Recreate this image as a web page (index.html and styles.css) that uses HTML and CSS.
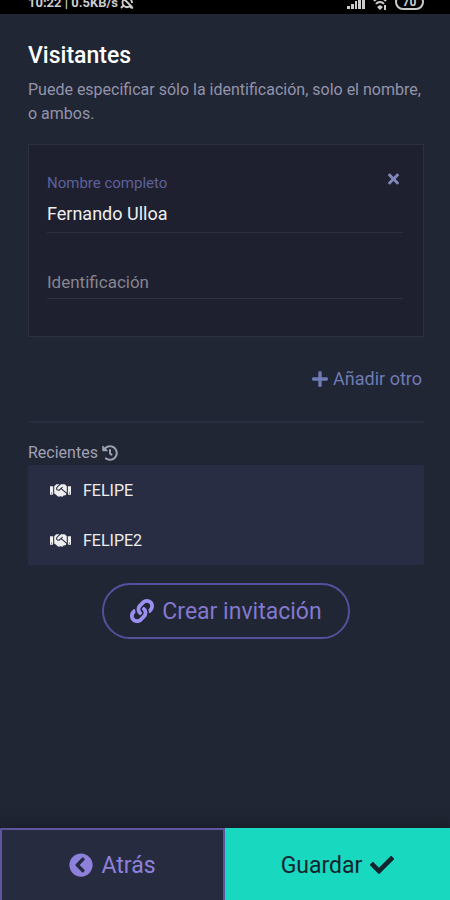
FILE: index.html
```html
<!DOCTYPE html>
<html lang="es">
<head>
    <meta charset="UTF-8">
    <meta name="viewport" content="width=device-width, initial-scale=1.0">
    <title>Visitantes</title>
    <link rel="stylesheet" href="styles.css">
</head>
<body>

    <!-- icons used more than once -->
    <svg class="sprite" aria-hidden="true">
        <symbol id="handshake" viewBox="0 0 640 512">
            <path d="M434.7 64h-85.9c-8 0-15.7 3-21.6 8.4l-98.3 90c-.1.1-.2.3-.3.4-16.6 15.6-16.3 40.5-2.1 56 12.7 13.9 39.4 17.6 56.1 2.7.1-.1.3-.1.4-.2l79.9-73.2c6.5-5.9 16.7-5.5 22.6 1 6 6.5 5.5 16.6-1 22.6l-26.1 23.9L504 313.8c2.9 2.4 5.5 5 7.9 7.7V128l-54.6-54.6c-5.9-6-14.1-9.4-22.6-9.4zM544 128.2v223.9c0 17.7 14.3 32 32 32h64V128.2h-96zm48 223.9c-8.8 0-16-7.2-16-16s7.2-16 16-16 16 7.2 16 16-7.2 16-16 16zM0 384h64c17.7 0 32-14.3 32-32V128.2H0V384zm48-63.9c8.8 0 16 7.2 16 16s-7.2 16-16 16-16-7.2-16-16c0-8.9 7.2-16 16-16zm435.9 18.6L334.6 217.5l-30 27.5c-29.7 27.1-75.2 24.5-101.7-4.4-26.9-29.4-24.8-74.9 4.4-101.7L289.1 64h-83.8c-8.5 0-16.6 3.4-22.6 9.4L128 128v223.9h18.3l90.5 81.9c27.4 22.3 67.7 18.1 90-9.3l.2-.2 17.9 15.5c15.9 13 39.4 10.5 52.3-5.4l31.4-38.6 5.4 4.4c13.7 11.1 33.9 9.1 45-4.7l9.5-11.7c11.2-13.8 9.1-33.9-4.6-45.1z"/>
        </symbol>
    </svg>

    <header class="status-bar">
        <div class="status-left">
            <span>10:22 | 0.5KB/s</span>
            <svg class="status-icon" viewBox="0 0 14 14">
                <path d="M2 1l10 10M4 3a5 5 0 0 0 0 7a5 5 0 0 0 6 0M7 2a5 5 0 0 1 5 5M3 10l-2 2M10 11l3 1" fill="none" stroke="currentColor" stroke-width="2"/>
            </svg>
        </div>
        <div class="status-right">
            <svg class="status-signal" viewBox="0 0 18 14">
                <path d="M0 10h3v3H0zM4 8h3v5H4zM8 5h2v8H8zM11 3h3v10h-3zM15 0h3v13h-3z" fill="currentColor"/>
            </svg>
            <svg class="status-icon" viewBox="0 0 14 14">
                <path d="M1 5a8 8 0 0 1 12 0M3 8a5 5 0 0 1 8 0" fill="none" stroke="currentColor" stroke-width="2"/>
                <path d="M7 9l3 2-3 3-3-3zM11 9h2v5h-2z" fill="currentColor"/>
            </svg>
            <span class="battery">70</span>
        </div>
    </header>

    <main class="content">
        <h1>Visitantes</h1>
        <p class="intro">Puede especificar sólo la identificación, solo el nombre, o ambos.</p>

        <form class="visitor-card" id="visitor-form">
            <button class="remove" type="button" aria-label="Quitar">
                <svg viewBox="0 0 352 512"><path d="M242.72 256l100.07-100.07c12.28-12.28 12.28-32.19 0-44.48l-22.24-22.24c-12.28-12.28-32.19-12.28-44.48 0L176 189.28 75.93 89.21c-12.28-12.28-32.19-12.28-44.48 0L9.21 111.45c-12.28 12.28-12.28 32.19 0 44.48L109.28 256 9.21 356.07c-12.28 12.28-12.28 32.19 0 44.48l22.24 22.24c12.28 12.28 32.2 12.28 44.48 0L176 322.72l100.07 100.07c12.28 12.28 32.2 12.28 44.48 0l22.24-22.24c12.28-12.28 12.28-32.19 0-44.48L242.72 256z"/></svg>
            </button>
            <div class="field">
                <label for="name">Nombre completo</label>
                <input type="text" id="name" value="Fernando Ulloa">
            </div>
            <div class="field">
                <input type="text" id="ident" placeholder="Identificación" aria-label="Identificación">
            </div>
        </form>

        <button class="add" type="button">
            <svg viewBox="0 0 448 512"><path d="M416 208H272V64c0-17.67-14.33-32-32-32h-32c-17.67 0-32 14.33-32 32v144H32c-17.67 0-32 14.33-32 32v32c0 17.67 14.33 32 32 32h144v144c0 17.67 14.33 32 32 32h32c17.67 0 32-14.33 32-32V304h144c17.67 0 32-14.33 32-32v-32c0-17.67-14.33-32-32-32z"/></svg>
            Añadir otro
        </button>

        <hr>

        <h2>
            Recientes
            <svg viewBox="0 0 512 512"><path d="M504 255.531c.253 136.64-111.18 248.372-247.82 248.468-59.015.042-113.223-20.53-155.822-54.911-11.077-8.94-11.905-25.541-1.839-35.607l11.267-11.267c8.609-8.609 22.353-9.551 31.891-1.984C173.062 425.135 212.781 440 256 440c101.705 0 184-82.311 184-184 0-101.705-82.311-184-184-184-48.814 0-93.149 18.969-126.068 49.932l50.754 50.754c10.08 10.08 2.941 27.314-11.313 27.314H24c-8.837 0-16-7.163-16-16V38.627c0-14.254 17.234-21.393 27.314-11.314l49.372 49.372C129.209 34.136 189.552 8 256 8c136.81 0 247.747 110.78 248 247.531zm-180.912 78.784l9.823-12.63c8.138-10.463 6.253-25.542-4.21-33.679L288 256.349V152c0-13.255-10.745-24-24-24h-16c-13.255 0-24 10.745-24 24v135.651l65.409 50.874c10.463 8.137 25.541 6.253 33.679-4.21z"/></svg>
        </h2>
        <ul class="recent">
            <li><button type="button"><svg><use href="#handshake"/></svg>FELIPE</button></li>
            <li><button type="button"><svg><use href="#handshake"/></svg>FELIPE2</button></li>
        </ul>

        <button class="create" type="button">
            <svg viewBox="0 0 512 512"><path d="M326.612 185.391c59.747 59.809 58.927 155.698.36 214.59-.11.12-.24.25-.36.37l-67.2 67.2c-59.27 59.27-155.699 59.262-214.96 0-59.27-59.26-59.27-155.7 0-214.96l37.106-37.106c9.84-9.84 26.786-3.3 27.294 10.606.648 17.722 3.826 35.527 9.69 52.721 1.986 5.822.567 12.262-3.783 16.612l-13.087 13.087c-28.026 28.026-28.905 73.66-1.155 101.96 28.024 28.579 74.086 28.749 102.325.51l67.2-67.19c28.191-28.191 28.073-73.757 0-101.83-3.701-3.694-7.429-6.564-10.341-8.569a16.037 16.037 0 0 1-6.947-12.606c-.396-10.567 3.348-21.456 11.698-29.806l21.054-21.055c5.521-5.521 14.182-6.199 20.584-1.731a152.482 152.482 0 0 1 20.522 17.197zM467.547 44.449c-59.261-59.262-155.69-59.27-214.96 0l-67.2 67.2c-.12.12-.25.25-.36.37-58.566 58.892-59.387 154.781.36 214.59a152.454 152.454 0 0 0 20.521 17.196c6.402 4.468 15.064 3.789 20.584-1.731l21.054-21.055c8.35-8.35 12.094-19.239 11.698-29.806a16.037 16.037 0 0 0-6.947-12.606c-2.912-2.005-6.64-4.875-10.341-8.569-28.073-28.073-28.191-73.639 0-101.83l67.2-67.19c28.239-28.239 74.3-28.069 102.325.51 27.75 28.3 26.872 73.934-1.155 101.96l-13.087 13.087c-4.35 4.35-5.769 10.79-3.783 16.612 5.864 17.194 9.042 34.999 9.69 52.721.509 13.906 17.454 20.446 27.294 10.606l37.106-37.106c59.271-59.259 59.271-155.699.001-214.959z"/></svg>
            Crear invitación
        </button>
    </main>

    <footer class="actions">
        <button class="back" type="button">
            <svg viewBox="0 0 512 512"><path d="M256 504C119 504 8 393 8 256S119 8 256 8s248 111 248 248-111 248-248 248zM142.1 273l135.5 135.5c9.4 9.4 24.6 9.4 33.9 0l17-17c9.4-9.4 9.4-24.6 0-33.9L226.9 256l101.6-101.6c9.4-9.4 9.4-24.6 0-33.9l-17-17c-9.4-9.4-24.6-9.4-33.9 0L142.1 239c-9.4 9.4-9.4 24.6 0 34z"/></svg>
            Atrás
        </button>
        <button class="save" type="submit" form="visitor-form">
            Guardar
            <svg viewBox="0 0 512 512"><path d="M173.898 439.404l-166.4-166.4c-9.997-9.997-9.997-26.206 0-36.204l36.203-36.204c9.997-9.998 26.207-9.998 36.204 0L192 312.69 432.095 72.596c9.997-9.997 26.207-9.997 36.204 0l36.203 36.204c9.997 9.997 9.997 26.206 0 36.204l-294.4 294.401c-9.998 9.997-26.207 9.997-36.204-.001z"/></svg>
        </button>
    </footer>

</body>
</html>
```
FILE: styles.css
```css
* {
    box-sizing: border-box;
}

body {
    display: flex;
    flex-direction: column;
    min-height: 100vh;
    margin: 0;
    background-color: #202633;
    color: #fff;
    font-family: Roboto, sans-serif;
    font-size: 16px;
}

button {
    display: flex;
    align-items: center;
    justify-content: center;
    gap: 8px;
    padding: 0;
    border: 0;
    background: none;
    color: inherit;
    font: inherit;
    cursor: pointer;
}

svg {
    flex: none;
    fill: currentColor;
}

.sprite {
    position: absolute;
    width: 0;
    height: 0;
}

.status-bar {
    display: flex;
    align-items: flex-end;
    justify-content: space-between;
    height: 14px;
    padding: 0 26px 4px 28px;
    overflow: hidden;
    background-color: #000;
    color: #ccc;
    font-size: 13px;
    font-weight: 700;
    line-height: 14px;
}

.status-left,
.status-right {
    display: flex;
    align-items: flex-end;
    gap: 2px;
}

.status-right {
    gap: 8px;
}

.status-icon {
    width: 14px;
    height: 14px;
}

.status-signal {
    width: 18px;
    height: 14px;
}

.battery {
    width: 29px;
    border: 2px solid #ccc;
    border-radius: 8px;
    font-size: 12px;
    line-height: 12px;
    text-align: center;
}

.content {
    flex: 1;
    display: flex;
    flex-direction: column;
    padding: 28px 26px 20px 28px;
}

h1 {
    margin: 0;
    font-size: 23px;
    font-weight: 500;
    line-height: 28px;
}

.intro {
    margin: 8px 0 18px;
    color: #9393ab;
    line-height: 24px;
}

.visitor-card {
    position: relative;
    display: flex;
    flex-direction: column;
    gap: 24px;
    padding: 30px 20px 37px 18px;
    border: 1px solid #2d3040;
    background-color: #1f202f;
}

.remove {
    position: absolute;
    top: 24px;
    right: 20px;
    width: 20px;
    height: 20px;
    color: #8386b8;
}

.remove svg {
    width: 11px;
    height: 16px;
}

.field {
    display: flex;
    flex-direction: column;
}

.field label {
    color: #5c609b;
    font-size: 15px;
    line-height: 16px;
}

.field input {
    width: 100%;
    height: 34px;
    margin-top: 8px;
    padding: 0 0 4px;
    border: 0;
    border-bottom: 1px solid #2d3040;
    outline: none;
    background: none;
    color: #eee;
    font-family: inherit;
    font-size: 18px;
}

.field input:placeholder-shown {
    padding-bottom: 0;
}

.field input::placeholder {
    color: #85858f;
    font-size: 17px;
    opacity: 1;
}

.add {
    align-self: flex-end;
    gap: 4px;
    margin-top: 30px;
    padding-right: 2px;
    color: #6f7bb5;
    font-size: 18px;
    line-height: 24px;
}

.add svg {
    width: 18px;
    height: 18px;
}

hr {
    width: 100%;
    margin: 30px 0 18px;
    border: 0;
    border-top: 2px solid #282d3f;
}

h2 {
    display: flex;
    align-items: center;
    gap: 4px;
    margin: 0;
    color: #a0a0b4;
    font-size: 16px;
    font-weight: 400;
    line-height: 24px;
}

h2 svg {
    width: 16px;
    height: 16px;
}

.recent {
    margin: 0 0 18px;
    padding: 0;
    border-radius: 2px;
    background-color: #292d43;
    list-style: none;
}

.recent button {
    justify-content: flex-start;
    gap: 12px;
    width: 100%;
    height: 50px;
    padding: 0 22px;
    color: #eee;
}

.recent svg {
    width: 21px;
    height: 17px;
}

.create {
    align-self: center;
    height: 56px;
    padding: 0 26px;
    border: 2px solid #574f9e;
    border-radius: 28px;
    color: #8378cf;
    font-size: 23px;
}

.create svg {
    width: 24px;
    height: 24px;
    color: #9b8ff2;
}

.actions {
    display: flex;
    box-shadow: 0 -2px 12px rgba(20, 18, 34, 0.6);
}

.actions button {
    width: 50%;
    height: 72px;
    border: 2px solid #5f559f;
    border-bottom: 0;
    font-size: 23px;
}

.actions svg {
    width: 24px;
    height: 24px;
}

.actions .back {
    border-radius: 2px 0 0 0;
    background-color: #272b3f;
    color: #8d81dc;
}

.actions .save {
    border-color: #18d8c0;
    background-color: #18d8c0;
    color: #14242e;
}
```
